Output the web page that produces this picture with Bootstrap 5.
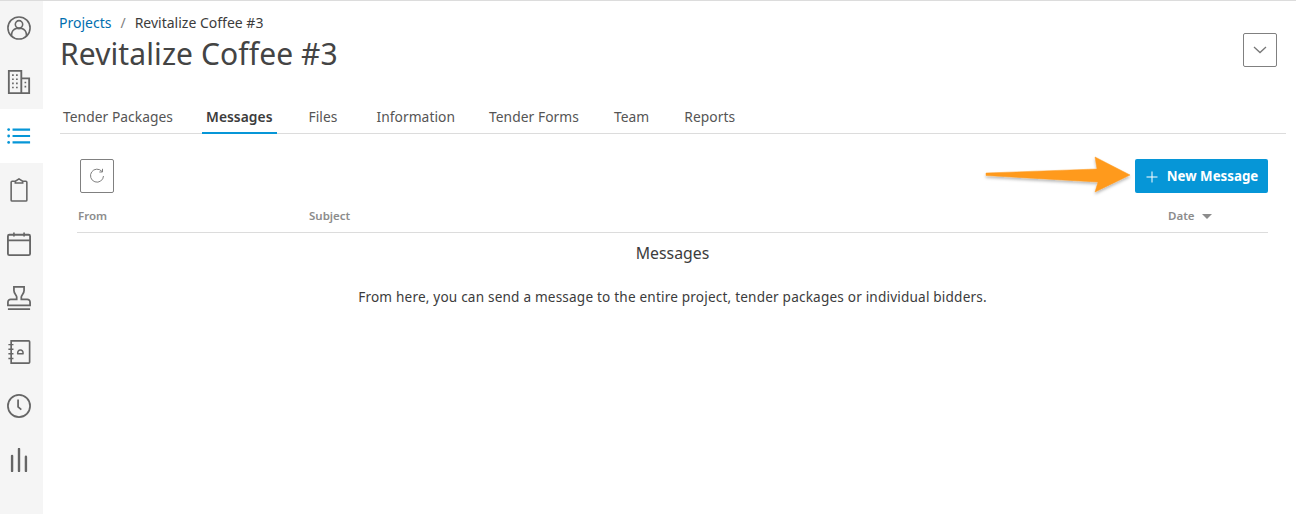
<!DOCTYPE html>
<html lang="en">
<head>
<meta charset="utf-8">
<title>Revitalize Coffee #3</title>
<link href="https://cdn.jsdelivr.net/npm/bootstrap@5.3.0/dist/css/bootstrap.min.css" rel="stylesheet">
<style>
html,body{height:100%;overflow:hidden}
body{font-family:"Noto Sans",sans-serif;color:#3c3c3c;background:#fff;font-size:14px}
.shell{height:514px;border-top:1px solid #dcdcdc}
.siderail{width:43px;background:#f5f5f5;flex:none}
.railitem{height:54px;display:flex;align-items:center;justify-content:center;color:#666;padding-right:5px}
.railitem.on{background:#fff;color:#0696d7}
.railitem svg{width:24px;height:24px;fill:none;stroke:currentColor;stroke-width:1.7}
.workarea{flex:1;min-width:0;padding:0 10px 0 17px;position:relative}
.crumbs{padding-top:12px;margin:0 0 0 -1px;font-size:14px;line-height:19px;--bs-breadcrumb-divider-color:#808080;--bs-breadcrumb-item-padding-x:9px}
.crumbs a{color:#006eaf;text-decoration:none}
.crumbs .active{color:#3c3c3c}
.pagetitle{font-size:30px;line-height:42px;font-weight:400;margin:1px 0 0;letter-spacing:.1px;color:#444}
.toggler{width:34px;height:34px;border:1px solid #808080;border-radius:2px;background:#fff;padding:0;margin:32px 9px 0 0;display:flex;align-items:center;justify-content:center}
.headrow{height:82px}
.tabstrip{margin-top:16px;border-bottom:1px solid #dcdcdc;height:35px}
.tabstrip .nav-link{color:#555;padding:8px 4px 0;height:35px;margin-right:27px;font-size:13.8px;line-height:19px;border-bottom:2px solid transparent;letter-spacing:.05px}
.tabstrip .nav-link.active{color:#3c3c3c;font-weight:600;border-bottom-color:#0696d7;background:none;margin-right:28px}
.tabstrip .firsttab{padding-left:3px;margin-right:25px}
.tabstrip .widegap{margin-right:31px}
.tabstrip .tightgap{margin-right:26px}
.panel{padding:25px 18px 0 17px}
.refreshbtn{width:34px;height:34px;border:1px solid #808080;border-radius:2px;background:#fff;padding:0;margin-left:3px;display:flex;align-items:center;justify-content:center}
.newbtn{height:34px;width:133px;background:#0696d7;border:0;border-radius:2px;color:#fff;font-weight:700;font-size:13.3px;padding:1px 0 0 1px;display:flex;align-items:center;justify-content:center;gap:9px}
.newbtn:hover{background:#0696d7;color:#fff}
.colheads{height:40px;border-bottom:1px solid #dcdcdc;font-size:11.5px;font-weight:600;color:#8c8c8c;align-items:center;padding-top:7px}
.colfrom{width:232px;padding-left:1px}
.coldate{width:100px;display:flex;align-items:center;gap:7px}
.caretdn{width:0;height:0;border-left:5px solid transparent;border-right:5px solid transparent;border-top:5px solid #8c8c8c}
.emptyhead{font-size:15.8px;line-height:21px;text-align:center;margin:10px 0 0;font-weight:400;color:#3c3c3c}
.emptytext{text-align:center;margin:23px 0 0;line-height:19px;font-size:13.6px;letter-spacing:.185px}
.callout{position:absolute;left:942px;top:152px;width:160px;height:46px;overflow:visible}
</style>
</head>
<body>
<div class="shell d-flex">
<nav class="siderail">
 <div class="railitem"><svg viewBox="0 0 26 26"><circle cx="13" cy="13" r="12"/><circle cx="13" cy="9" r="4"/><path d="M5 22v-2c0-3.500 3-6 5.500-6.800a7 7 0 0 0 5 0C18 14 21 16.500 21 20v2"/></svg></div>
 <div class="railitem"><svg viewBox="0 0 26 26"><path d="M2 25V1h13.500v24zM15.500 9h8.500v16h-8.500z" stroke-width="2"/><path d="M5.500 5.500h1.800M9.800 5.500h1.800M5.500 10h1.800M9.800 10h1.800M5.500 14.500h1.800M9.800 14.500h1.800M5.500 19h1.800M9.800 19h1.800M19 13.500h1.800M19 18h1.800" stroke-width="1.800"/></svg></div>
 <div class="railitem on"><svg viewBox="0 0 26 26"><path d="M6 6h19M6 13h19M6 20h19" stroke-width="2.400"/><circle cx="1.800" cy="6" r="1.500" fill="currentColor" stroke="none"/><circle cx="1.800" cy="13" r="1.500" fill="currentColor" stroke="none"/><circle cx="1.800" cy="20" r="1.500" fill="currentColor" stroke="none"/></svg></div>
 <div class="railitem"><svg viewBox="0 0 26 26"><path d="M9 3.500H5.500a1 1 0 0 0-1 1V24a1 1 0 0 0 1 1h15a1 1 0 0 0 1-1V4.500a1 1 0 0 0-1-1H17M9 5.500V3.500L13 1l4 2.500v2z"/></svg></div>
 <div class="railitem"><svg viewBox="0 0 26 26"><rect x="1" y="3" width="24" height="22" rx="1.500" stroke-width="2"/><path d="M1 9h24M7.500 .5v4.500M18.500 .5v4.500" stroke-width="1.800"/></svg></div>
 <div class="railitem"><svg viewBox="0 0 26 26"><path d="M7.500 1h11v4c0 3.500-3 4.500-3 7v2.500h6.500a3 3 0 0 1 3 3V21H1v-3.500a3 3 0 0 1 3-3h6.500V12c0-2.500-3-3.500-3-7zM1 25h24" stroke-width="1.900"/></svg></div>
 <div class="railitem"><svg viewBox="0 0 26 26"><path d="M4.500 1h19a1 1 0 0 1 1 1v22a1 1 0 0 1-1 1h-19z" stroke-width="1.800"/><path d="M1.500 5h5.500M1.500 10h5.500M1.500 15h5.500M1.500 20h5.500" stroke-width="1.600"/><path d="M11.500 15c0-5.500 6-5.500 6 0M11 15h7" stroke-width="1.600"/></svg></div>
 <div class="railitem"><svg viewBox="0 0 26 26"><circle cx="13" cy="13" r="12" stroke-width="1.900"/><path d="M12 6v8l3.500 3" stroke-width="1.900"/></svg></div>
 <div class="railitem"><svg viewBox="0 0 26 26"><path d="M5.500 8.500V25M13 1v24M20.500 9.500V25" stroke-width="2.600" stroke-linecap="round"/></svg></div>
</nav>
<main class="workarea">
 <div class="headrow d-flex justify-content-between align-items-start">
  <div>
   <ol class="breadcrumb crumbs"><li class="breadcrumb-item"><a href="#">Projects</a></li><li class="breadcrumb-item active">Revitalize Coffee #3</li></ol>
   <h1 class="pagetitle">Revitalize Coffee #3</h1>
  </div>
  <button class="toggler" aria-label="Expand"><svg width="14" height="8" viewBox="0 0 14 8" fill="none" stroke="#777" stroke-width="1.300"><path d="M1 1l6 5.500L13 1"/></svg></button>
 </div>
 <ul class="nav tabstrip">
  <li class="nav-item"><a class="nav-link firsttab" href="#">Tender Packages</a></li>
  <li class="nav-item"><a class="nav-link active" href="#">Messages</a></li>
  <li class="nav-item"><a class="nav-link widegap" href="#">Files</a></li>
  <li class="nav-item"><a class="nav-link tightgap" href="#">Information</a></li>
  <li class="nav-item"><a class="nav-link" href="#">Tender Forms</a></li>
  <li class="nav-item"><a class="nav-link" href="#">Team</a></li>
  <li class="nav-item"><a class="nav-link" href="#">Reports</a></li>
 </ul>
 <section class="panel">
  <div class="d-flex justify-content-between align-items-center">
   <button class="refreshbtn" aria-label="Refresh"><svg width="16" height="16" viewBox="0 0 16 16" fill="none" stroke="#808080" stroke-width="1"><path d="M13 3.500A6.500 6.500 0 1 0 14.500 8"/><path d="M13.500 .8v3.200h-3.200"/></svg></button>
   <button class="btn newbtn"><svg width="12" height="12" viewBox="0 0 12 12" stroke="#fff" stroke-width="1"><path d="M6 .5v11M.5 6h11"/></svg>New Message</button>
  </div>
  <div class="colheads d-flex">
   <div class="colfrom">From</div>
   <div class="flex-grow-1">Subject</div>
   <div class="coldate">Date <span class="caretdn"></span></div>
  </div>
  <h2 class="emptyhead">Messages</h2>
  <p class="emptytext">From here, you can send a message to the entire project, tender packages or individual bidders.</p>
 </section>
 <svg class="callout" viewBox="0 0 160 46" aria-hidden="true"><defs><filter id="sh" x="-10%" y="-20%" width="120%" height="150%"><feDropShadow dx="0" dy="2" stdDeviation="1.500" flood-color="#000" flood-opacity=".28"/></filter></defs><path filter="url(#sh)" fill="#ff9a1f" stroke="#ff9a1f" stroke-width=".5" stroke-linejoin="round" d="M1 20 L112 16 L110 4 L145 22 L110 39 L113 29 L1 22.500 Z"/></svg>
</main>
</div>
<script src="https://cdn.jsdelivr.net/npm/bootstrap@5.3.0/dist/js/bootstrap.bundle.min.js"></script>
</body>
</html>
